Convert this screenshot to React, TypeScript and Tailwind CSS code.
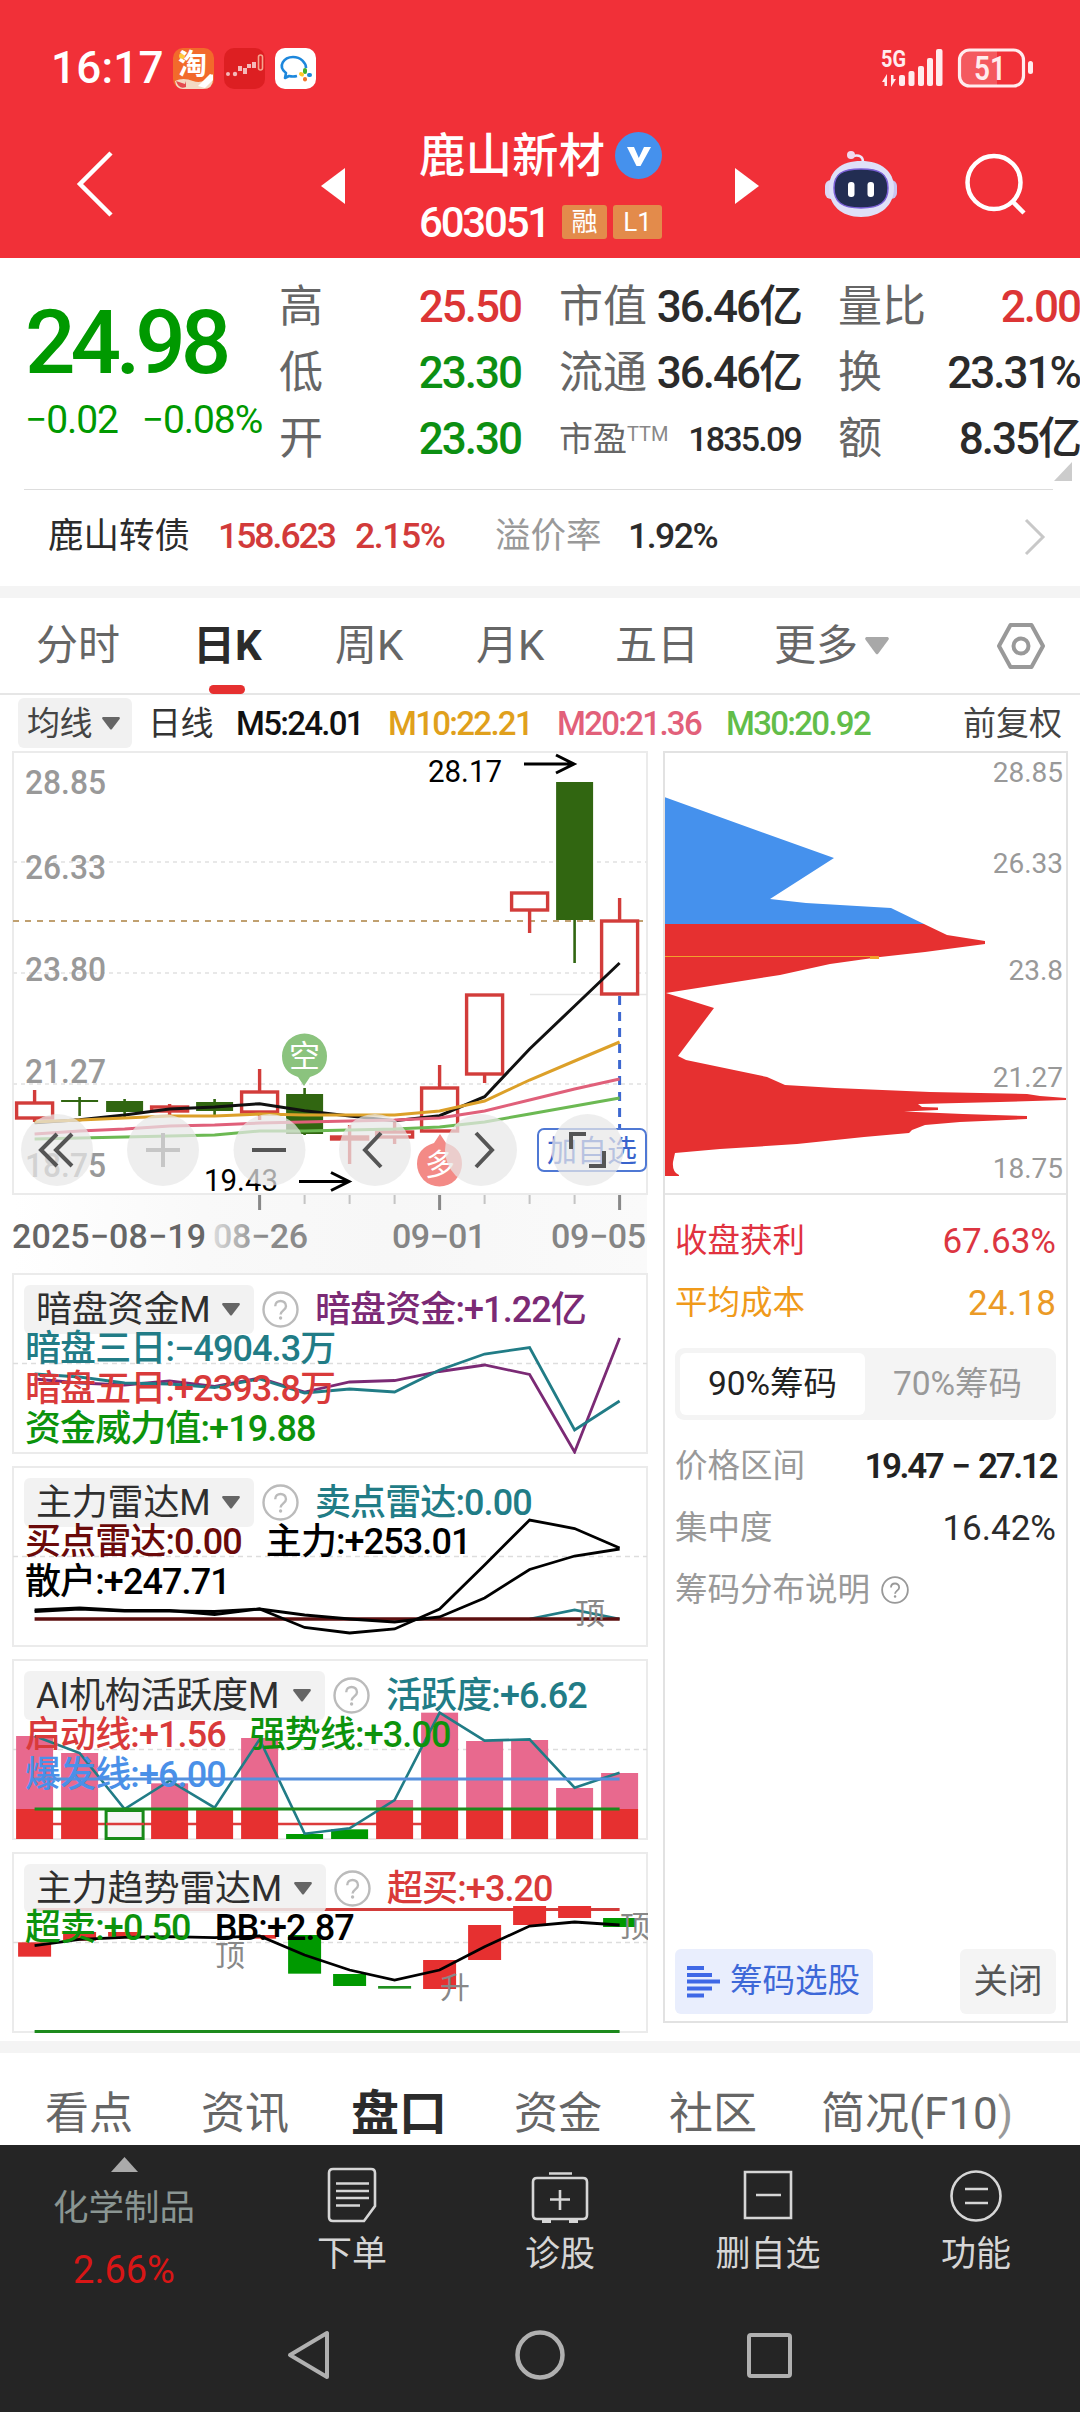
import type { ReactNode } from 'react'

// every daily column in the charts shares the same 45px pitch
const cx = (i: number) => 34.6 + 45 * i
const line = (ys: number[], from = 0) => ys.map((y, i) => `${cx(i + from)},${y}`).join(' ')

const RED = '#d23c3a'
const TEAL = '#217c86'

// [open/close top, bottom, wick top, wick bottom, kind]
const candles: [number, number, number, number, string][] = [
  [1103, 1118, 1090, 1122, 'up'],
  [1100, 1102, 1097, 1116, 'down'],
  [1101, 1112, 1099, 1117, 'down'],
  [1107, 1111, 1104, 1115, 'up'],
  [1102, 1111, 1099, 1115, 'down'],
  [1092, 1112, 1069, 1120, 'up'],
  [1094, 1134, 1088, 1135, 'down'],
  [1137, 1139, 1125, 1164, 'up'],
  [1132, 1137, 1121, 1144, 'up'],
  [1088, 1131, 1065, 1131, 'up'],
  [995, 1074, 995, 1083, 'up'],
  [893, 910, 893, 933, 'up'],
  [782, 920, 782, 963, 'down'],
  [921, 994, 898, 994, 'up'],
]

const Triangle = ({ className = 'text-[#666]', w = 18, h = 13 }: { className?: string; w?: number; h?: number }) => (
  <svg width={w} height={h} viewBox="0 0 18 13" preserveAspectRatio="none" className={className}>
    <path d="M1 0h16q1.4 0.6 0.6 2L10 12q-1 1.2-2 0L0.4 2Q-0.4 0.6 1 0z" fill="currentColor" />
  </svg>
)

const Help = ({ size = 37, color = '#bbb' }: { size?: number; color?: string }) => (
  <svg width={size} height={size} viewBox="0 0 37 37" fill="none" stroke={color} className="shrink-0">
    <circle cx="18.5" cy="18.5" r="17" strokeWidth="2.4" />
    <path d="M13.2 15.2c0-7 10.8-7 10.8 0 0 4-5.4 4.300-5.400 8.300" strokeWidth="2.4" />
    <circle cx="18.6" cy="27" r="0.9" strokeWidth="1.6" />
  </svg>
)

const StatusBar = () => (
  <div className="flex h-[110px] items-center pt-[26px] pl-[51px] text-white">
    <span className="w-[122px] text-[44px] leading-none font-medium tracking-[0.2px]">16:17</span>
    <div className="flex gap-[10px]">
      <svg width="41" height="41" viewBox="0 0 41 41">
        <rect width="41" height="41" rx="10" fill="#f26a2b" />
        <path d="M2 33q8-4 18 0t20-7v5q0 10-10 10H10q-7 0-8-8z" fill="#f3d9c4" />
        <path d="M3 33l9 3 1-3v6q-7 3-10-6z" fill="#e44a4f" />
        <path d="M25 38l12-12 3 1v5l-8 8z" fill="#fff" />
        <circle cx="9" cy="8" r="3" fill="#ffc93c" />
        <text x="5" y="27" fontSize="29" fontWeight="700" fill="#fff">淘</text>
      </svg>
      <svg width="41" height="41" viewBox="0 0 41 41">
        <rect width="41" height="41" rx="10" fill="#dd1f22" />
        <g fill="#f4b9b9">
          <circle cx="4" cy="26" r="2" />
          <circle cx="11" cy="26" r="2.200" />
          <rect x="14" y="18" width="4" height="5" />
          <rect x="19" y="20" width="4" height="6" />
          <rect x="23" y="16" width="4" height="4" />
          <rect x="28" y="14" width="4" height="6" />
        </g>
        <rect x="34.500" y="7" width="4" height="15" rx="2" fill="none" stroke="#f6a48f" strokeWidth="1.600" />
      </svg>
      <svg width="41" height="41" viewBox="0 0 41 41">
        <rect width="41" height="41" rx="10" fill="#fff" />
        <path d="M22 28q-4 1-8 0l-4 2 1-5C2 18 9 9 18 9c8 0 13 6 13 11" fill="none" stroke="#1d87dc" strokeWidth="2.600" strokeLinejoin="round" />
        <path d="M30 22v2" stroke="#43b02a" strokeWidth="4" strokeLinecap="round" />
        <path d="M26 26l1 0.500" stroke="#ffc928" strokeWidth="4" strokeLinecap="round" />
        <path d="M34 27h1" stroke="#1d87dc" strokeWidth="4" strokeLinecap="round" />
        <path d="M30 31v0.500" stroke="#f0762b" strokeWidth="4" strokeLinecap="round" />
      </svg>
    </div>
    <svg width="155" height="42" viewBox="880 47 155 42" className="ml-[564px]" fill="#ffecee">
      <text x="881" y="67" fontSize="24" fontWeight="700" textLength="25" lengthAdjust="spacingAndGlyphs">5G</text>
      <path d="M882 82l5-8v12h-2.500v-4zM896 79l-5 8V75h2.500v4z" />
      <rect x="899" y="75" width="6" height="11" rx="2" />
      <rect x="908.500" y="71" width="6" height="15" rx="2" />
      <rect x="918" y="66" width="6" height="20" rx="2" />
      <rect x="927" y="58" width="6" height="28" rx="2" />
      <rect x="936" y="49" width="6.500" height="37" rx="2" />
      <path d="M968 51h29v34h-29q-8 0-8-8V59q0-8 8-8z" opacity=".22" />
      <rect x="959.500" y="50" width="64" height="36" rx="10" fill="none" stroke="#ffecee" strokeWidth="3.200" />
      <rect x="1028" y="61" width="5" height="13" rx="2.500" />
      <text x="974" y="80" fontSize="34" fontWeight="600" textLength="32" lengthAdjust="spacingAndGlyphs">51</text>
    </svg>
  </div>
)

const TitleBar = () => (
  <div className="flex h-[148px] items-center pl-[76px] text-white">
    <svg width="37" height="66" viewBox="0 0 37 66" fill="none" stroke="#fff" strokeWidth="4.500">
      <path d="M35 2L4 33L35 64" />
    </svg>
    <svg width="24" height="36" viewBox="0 0 24 36" className="ml-[208px] mt-[4px]">
      <path d="M24 0v36L0 18z" fill="#fff" />
    </svg>
    <div className="ml-[74px] flex w-[243px] flex-col self-start pt-[15px]">
      <div className="flex h-[60px] items-center justify-between">
        <span className="pt-[2px] text-[46.5px] leading-none font-medium">鹿山新材</span>
        <svg width="47" height="47" viewBox="0 0 47 47">
          <circle cx="23.500" cy="23.500" r="23.500" fill="#4591ed" />
          <path d="M12 15h7l4.800 11L29 15h7L25.500 34h-4z" fill="#fff" />
        </svg>
      </div>
      <div className="flex h-[74px] items-center justify-between">
        <span className="pt-[1px] text-[42px] leading-none tracking-[-2.200px] font-medium">603051</span>
        <div className="flex gap-[6px] text-[26px] leading-none">
          <span className="flex h-[34px] w-[45px] items-center justify-center rounded-[3px] bg-[#e38b4b]">融</span>
          <span className="flex h-[34px] w-[49px] items-center justify-center rounded-[3px] bg-[#e38b4b]">L1</span>
        </div>
      </div>
    </div>
    <svg width="24" height="36" viewBox="0 0 24 36" className="ml-[73px] mt-[4px]">
      <path d="M0 0v36l24-18z" fill="#fff" />
    </svg>
    <svg width="74" height="68" viewBox="824 149 74 68" className="ml-[65px]">
      <path d="M863 161q0-8-10-6" fill="none" stroke="#eee9fb" strokeWidth="2.500" />
      <circle cx="851" cy="154" r="4" fill="#f1d9ee" />
      <rect x="825" y="179" width="14" height="19" rx="6" fill="#dcd8f4" />
      <rect x="883" y="179" width="14" height="19" rx="6" fill="#c9c5f0" />
      <path d="M861 160c20 0 33 10 33 27s-13 29-33 29-32-12-32-29 12-27 32-27z" fill="#dfe0f8" />
      <path d="M861 168c19 0 27 5 27 19s-8 20-27 20-27-6-27-20 8-19 27-19z" fill="#222d52" stroke="#7a5fd6" strokeWidth="1.500" />
      <rect x="848" y="181" width="6.500" height="15" rx="3" fill="#fff" />
      <rect x="867.500" y="181" width="6.500" height="15" rx="3" fill="#fff" />
    </svg>
    <svg width="62" height="62" viewBox="0 0 62 62" className="ml-[67px]" fill="none" stroke="#fff" strokeWidth="4.500">
      <circle cx="29" cy="29.500" r="26.500" />
      <path d="M47 48l12 12" />
    </svg>
  </div>
)

const Quote = ({ label, value, color = 'text-[#2b2b2b]', small = false }: { label: ReactNode; value: string; color?: string; small?: boolean }) => (
  <div className="flex h-[66px] items-center justify-between leading-none">
    <span className={`whitespace-nowrap text-[#666] ${small ? 'text-[34px]' : 'text-[44px]'}`}>{label}</span>
    <span className={`whitespace-nowrap font-medium ${color} ${small ? 'text-[34px] tracking-[-1.800px]' : 'text-[44px] tracking-[-2px]'}`}>{value}</span>
  </div>
)

const QuotePanel = () => (
  <section className="relative h-[231px] bg-white pt-[16px]">
    <div className="flex">
      <div className="w-[279px] pl-[25px] text-[#009900]">
        <div className="pt-[24px] text-[89px] leading-[90px] font-medium tracking-[-5.200px]">24.98</div>
        <div className="mt-[10px] flex gap-[24px] text-[39px] leading-[44px] tracking-[-1.100px]">
          <span>−0.02</span>
          <span>−0.08%</span>
        </div>
      </div>
      <div className="w-[242px]">
        <Quote label="高" value="25.50" color="text-[#dc3535]" />
        <Quote label="低" value="23.30" color="text-[#0c8f12]" />
        <Quote label="开" value="23.30" color="text-[#0c8f12]" />
      </div>
      <div className="ml-[38px] w-[242px]">
        <Quote label="市值" value="36.46亿" />
        <Quote label="流通" value="36.46亿" />
        <Quote small label={<>市盈<sup className="text-[20px] text-[#888]">TTM</sup></>} value="1835.09" />
      </div>
      <div className="ml-[37px] w-[242px]">
        <Quote label="量比" value="2.00" color="text-[#dc3535]" />
        <Quote label="换" value="23.31%" />
        <Quote label="额" value="8.35亿" />
      </div>
    </div>
    <svg width="18" height="19" viewBox="0 0 18 19" className="absolute right-[8px] bottom-[8px]">
      <path d="M18 0v19H0z" fill="#ccc" />
    </svg>
  </section>
)

const BondRow = () => (
  <section className="flex h-[96px] items-center bg-white pl-[48px] text-[35.5px] leading-none">
    <div className="flex w-full items-center pb-[2px]">
      <span className="w-[170px] text-[#2b2b2b]">鹿山转债</span>
      <span className="w-[137px] font-medium tracking-[-2px] text-[#d23a3a]">158.623</span>
      <span className="w-[140px] font-medium tracking-[-1.400px] text-[#d23a3a]">2.15%</span>
      <span className="w-[133px] text-[#999]">溢价率</span>
      <span className="w-[395px] font-medium tracking-[-1.500px] text-[#2b2b2b]">1.92%</span>
      <svg width="24" height="38" viewBox="0 0 24 38" fill="none" stroke="#c8c8c8" strokeWidth="3">
        <path d="M3 2l17 17L3 36" />
      </svg>
    </div>
  </section>
)

const Tabs = () => (
  <nav className="flex h-[97px] items-center border-b-2 border-[#e6e6e6] bg-white pl-[36px] text-[42px] leading-none text-[#666]">
    <span className="w-[157px]">分时</span>
    <span className="relative w-[142px] font-bold text-[#2b2b2b]">
      日K
      <i className="absolute top-[60px] left-[16px] h-[9px] w-[36px] rounded-full bg-[#e63030]" />
    </span>
    <span className="w-[141px]">周K</span>
    <span className="w-[139px]">月K</span>
    <span className="w-[159px]">五日</span>
    <span className="flex w-[222px] items-center gap-[7px]">
      更多
      <Triangle w={24} h={18} className="text-[#a8a8a8]" />
    </span>
    <svg width="50" height="48" viewBox="0 0 50 48" fill="none" stroke="#999" strokeWidth="4" strokeLinejoin="round">
      <path d="M14.500 3h21L47 24L35.500 45h-21L3 24z" />
      <circle cx="25" cy="24" r="7.500" />
    </svg>
  </nav>
)

const AverageRow = () => (
  <div className="flex h-[56px] items-center bg-white pl-[18px] text-[33px] leading-none font-medium tracking-[-1.700px]">
    <span className="mr-[16px] flex h-[50px] w-[114px] items-center gap-[10px] rounded-[6px] bg-[#f1f1f1] pl-[9px] font-normal tracking-[-0.500px] text-[#444]">
      均线
      <Triangle />
    </span>
    <span className="w-[88px] font-normal tracking-[-0.500px] text-[#333]">日线</span>
    <span className="w-[152px] text-[#111]">M5:24.01</span>
    <span className="w-[169px] text-[#e0a01c]">M10:22.21</span>
    <span className="w-[169px] text-[#e2607a]">M20:21.36</span>
    <span className="w-[237px] text-[#62bd49]">M30:20.92</span>
    <span className="font-normal tracking-normal text-[#444]">前复权</span>
  </div>
)

const PriceChart = () => (
  <svg width="660" height="526" viewBox="0 750 660 526">
    <defs>
      <linearGradient id="haze" x1="0" x2="1">
        <stop offset="0" stopColor="#fff" />
        <stop offset=".3" stopColor="#f9f9f9" />
        <stop offset=".6" stopColor="#f7f7f7" />
        <stop offset="1" stopColor="#fafafa" />
      </linearGradient>
      <linearGradient id="fade" gradientUnits="userSpaceOnUse" x1="212" x2="262">
        <stop offset="0" stopColor="#ddd" />
        <stop offset="1" stopColor="#8a8a8a" />
      </linearGradient>
    </defs>
    <rect x="13" y="1194" width="634" height="90" fill="url(#haze)" />
    <rect x="13" y="752" width="634" height="442" fill="#fff" stroke="#ebebeb" strokeWidth="2" />
    <path d="M13 862h634M13 973h634M13 1084h634" stroke="#e8e8e8" strokeWidth="2" strokeDasharray="4 4" />
    <path d="M530 994.500h117" stroke="#e6e6e6" strokeWidth="1.500" />
    <path d="M13 921h634" stroke="#c0a070" strokeWidth="2" strokeDasharray="6 6" />

    <g fontSize="34" fontWeight="500" fill="#999">
      <text x="25" y="793.500" textLength="81" lengthAdjust="spacingAndGlyphs">28.85</text>
      <text x="25" y="878.500" textLength="81" lengthAdjust="spacingAndGlyphs">26.33</text>
      <text x="25" y="980.500" textLength="81" lengthAdjust="spacingAndGlyphs">23.80</text>
      <text x="25" y="1082.500" textLength="81" lengthAdjust="spacingAndGlyphs">21.27</text>
      <text x="25" y="1176.500" textLength="81" lengthAdjust="spacingAndGlyphs">18.75</text>
    </g>

    <path d={`M${cx(13)} 996V1130`} stroke="#3d68d0" strokeWidth="3" strokeDasharray="9 7" />
    {candles.map(([top, bottom, high, low, kind], i) => {
      const up = kind === 'up'
      const color = up ? RED : '#316611'
      return (
        <g key={i} stroke={color}>
          <path d={`M${cx(i)} ${high}V${top}M${cx(i)} ${bottom}V${low}`} strokeWidth={up ? 3.4 : 2.6} />
          {up ? (
            <rect x={cx(i) - 18} y={top} width="36" height={bottom - top} fill="#fff" strokeWidth="3.400" />
          ) : (
            <rect x={cx(i) - 18.5} y={top} width="37" height={bottom - top} fill={color} stroke="none" />
          )}
        </g>
      )
    })}
    <g fill="none" strokeWidth="3">
      <polyline points={line([1122.7, 1119.7, 1115, 1109, 1107, 1103.7, 1110.7, 1116, 1120.7, 1115.7, 1096.7, 1049, 1006, 963])} stroke="#111" />
      <polyline points={line([1122, 1120, 1118, 1116, 1116, 1114, 1115, 1115, 1115, 1111, 1101, 1080, 1061, 1042])} stroke="#dca029" />
      <polyline points={line([1134, 1131, 1129, 1126, 1125, 1123, 1122, 1121, 1120, 1118, 1111, 1100, 1089, 1079])} stroke="#e0607a" />
      <polyline points={line([1139, 1138, 1137, 1136, 1135, 1131, 1131, 1130, 1129, 1127, 1122, 1114, 1106, 1098])} stroke="#6cb953" />
    </g>

    {/* buy / sell balloons */}
    <path d="M304 1086l-6-9q-16-5-16-21a22.500 22.500 0 0 1 45 0q0 16-17 21z" fill="#8bc37e" />
    <text x="304.500" y="1067" fontSize="31" textAnchor="middle" fill="#fff">空</text>
    <path d="M440 1134l6 9q16 5 16 21a22.500 22.500 0 0 1-45 0q0-16 17-21z" fill="#f38a86" />
    <text x="440" y="1175" fontSize="30" textAnchor="middle" fill="#fff">多</text>

    <g fontSize="32" fill="#000">
      <text x="428" y="782" textLength="74" lengthAdjust="spacingAndGlyphs">28.17</text>
      <text x="204" y="1191" textLength="74" lengthAdjust="spacingAndGlyphs">19.43</text>
    </g>
    <path d="M524 764h50M556 755l18 9l-18 9M299 1181.500h50M331 1172.500l18 9l-18 9" fill="none" stroke="#000" strokeWidth="3" />

    <rect x="538" y="1129" width="108" height="42" rx="6" fill="#fff" stroke="#4f78d4" strokeWidth="2" />
    <text x="592" y="1161" fontSize="30" textAnchor="middle" fill="#3963cc">加自选</text>

    {/* floating chart controls */}
    <g fill="#e8e8e8" fillOpacity=".72">
      {[57, 163, 269.5, 375, 481, 587.5].map((x) => <circle key={x} cx={x} cy="1150" r="36" />)}
    </g>
    <g fill="none" stroke="#555" strokeWidth="4">
      <path d="M57 1134l-16 16l16 16M72 1134l-16 16l16 16" />
      <path d="M146 1150h34M163 1133v34" stroke="#c6c6c6" />
      <path d="M252 1150h34" />
      <path d="M381 1133l-16 17l16 17M476 1133l16 17l-16 17" />
      <path d="M571 1149v-15h15M604 1151v15h-15" />
    </g>

    <path d="M304.600 1195v9M349.600 1195v9M394.600 1195v9M484.600 1195v9M529.600 1195v9M574.600 1195v9" stroke="#c4c4c4" strokeWidth="2" />
    <path d="M259.600 1195v15M439.600 1195v15M619.600 1195v15" stroke="#888" strokeWidth="3" />
    <g fontSize="34" fontWeight="500" fill="#858585">
      <text x="12" y="1248" fill="#666" textLength="194" lengthAdjust="spacing">2025−08−19</text>
      <text x="213" y="1248" fill="url(#fade)" textLength="95" lengthAdjust="spacing">08−26</text>
      <text x="392" y="1248" textLength="94" lengthAdjust="spacing">09−01</text>
      <text x="551" y="1248" textLength="95" lengthAdjust="spacing">09−05</text>
    </g>
  </svg>
)

type PanelProps = { title: string; buttonClass: string; first: ReactNode; rows?: ReactNode; chart: ReactNode; viewBox: string }

// indicator strip: drop-down title and legend drawn over the chart
const Indicator = ({ title, buttonClass, first, rows, chart, viewBox }: PanelProps) => (
  <div className="relative ml-[12px] h-[181px] w-[636px] border-2 border-[#ebebeb] text-[36px] leading-none tracking-[-0.900px]">
    <svg width="636" height="181" viewBox={viewBox} className="absolute -top-[2px] -left-[2px] max-w-none">{chart}</svg>
    <div className="relative pt-[10px] pl-[10px]">
      <div className="flex h-[49px] items-center font-medium whitespace-nowrap">
        <span className={`flex h-[49px] items-center justify-between rounded-[6px] bg-[#f0f0f0]/85 pr-[14px] pl-[12px] font-normal tracking-[-0.200px] text-[#2f2f2f] ${buttonClass}`}>
          {title}
          <Triangle />
        </span>
        <span className="mr-[16px] ml-[8px]"><Help /></span>
        {first}
      </div>
      <div className="-mt-[5px] pl-px font-medium">{rows}</div>
    </div>
  </div>
)

const Row = ({ children }: { children: ReactNode }) => <div className="flex h-[40px] items-center gap-[24px] whitespace-nowrap">{children}</div>

// bar and line tops are stored at three times the drawn size
const toY = (v: number) => v / 3 + 1650

const activity = [258, 309, 478, 400, 475, 264, 552, 538, 450, 188, 273, 270, 414, 369]

const trend: [number, number, number, string][] = [
  [0, 877, 920, '#e63030'],
  [1, 846, 872, '#e63030'],
  [2, 846, 860, '#e63030'],
  [5, 855, 866, '#e63030'],
  [6, 855, 971, '#009900'],
  [7, 972, 1008, '#009900'],
  [8, 1008, 1016, '#1f8f1f'],
  [9, 930, 1017, '#e63030'],
  [10, 825, 930, '#e63030'],
  [11, 768, 825, '#e63030'],
  [12, 768, 804, '#e63030'],
  [13, 804, 831, '#009900'],
]

const Indicators = () => (
  <div className="flex flex-col gap-[12px]">
    <Indicator
      title="暗盘资金M"
      buttonClass="w-[230px]"
      viewBox="12 1273 636 181"
      first={<span className="text-[#7b2a75]">暗盘资金:+1.22亿</span>}
      rows={
        <>
          <Row><span className="text-[#217c86]">暗盘三日:−4904.3万</span></Row>
          <Row><span className="text-[#d93a3a]">暗盘五日:+2393.8万</span></Row>
          <Row><span className="text-[#0c930c]">资金威力值:+19.88</span></Row>
        </>
      }
      chart={
        <g fill="none" strokeWidth="2.800">
          <path d="M13 1363.500h634" stroke="#ddd" strokeWidth="1.500" strokeDasharray="5 4" />
          <polyline stroke="#7b2a75" points={line([1379, 1383, 1385, 1381, 1386.500, 1378, 1392, 1382, 1380.500, 1371.500, 1365, 1374.500, 1452, 1338])} />
          <polyline stroke={TEAL} points={line([1374, 1377, 1383, 1384, 1387.500, 1379, 1393, 1389, 1392, 1370, 1354, 1347.500, 1430, 1401])} />
        </g>
      }
    />
    <Indicator
      title="主力雷达M"
      buttonClass="w-[230px]"
      viewBox="12 1466 636 181"
      first={<span className="text-[#217c86]">卖点雷达:0.00</span>}
      rows={
        <>
          <Row>
            <span className="text-[#6b0a0a]">买点雷达:0.00</span>
            <span className="text-black">主力:+253.01</span>
          </Row>
          <Row><span className="text-black">散户:+247.71</span></Row>
        </>
      }
      chart={
        <g fill="none" strokeWidth="2.800">
          <path d="M13 1556.500h634" stroke="#ddd" strokeWidth="1.500" strokeDasharray="5 4" />
          <polyline stroke={TEAL} points={line([1619, 1610, 1619], 11)} />
          <path d={`M${cx(0)} 1619H${cx(13)}`} stroke="#5c0f0f" strokeWidth="3.500" />
          <polyline stroke="#000" points={line([1610, 1608, 1610.500, 1610.500, 1614.500, 1609, 1615, 1619, 1622, 1617, 1598, 1569.500, 1556, 1549])} />
          <polyline stroke="#000" points={line([1611.500, 1609, 1611, 1611, 1611.500, 1609, 1627.500, 1633, 1629, 1609, 1565, 1520, 1528.500, 1548])} />
          <text x="575" y="1624" fontSize="30" fill="#888">顶</text>
        </g>
      }
    />
    <Indicator
      title="AI机构活跃度M"
      buttonClass="w-[301px]"
      viewBox="12 1659 636 181"
      first={<span className="text-[#217c86]">活跃度:+6.62</span>}
      rows={
        <>
          <Row>
            <span className="text-[#d93a3a]">启动线:+1.56</span>
            <span className="text-[#0c930c]">强势线:+3.00</span>
          </Row>
          <Row><span className="text-[#4a90e8]">爆发线:+6.00</span></Row>
        </>
      }
      chart={
        <g fill="none">
          <path d="M13 1749.500h634" stroke="#ddd" strokeWidth="1.500" strokeDasharray="5 4" />
          <path d={`M${cx(0)} 1824H${cx(9)}`} stroke="#dc3b3b" strokeWidth="2.600" />
          {activity.map((top, i) => {
            const y = toY(top)
            if (i === 2) return <rect key={i} x={cx(i) - 18.5} y="1810.500" width="37" height="28" fill="#f6f6f6" stroke="#178a17" strokeWidth="3" />
            if (i === 6 || i === 7) return <rect key={i} x={cx(i) - 18.5} y={y} width="37" height={1839 - y} fill="#009900" />
            return (
              <g key={i}>
                <rect x={cx(i) - 18.5} y={y} width="37" height={1809 - y} fill="#e8698e" />
                <rect x={cx(i) - 18.5} y="1809" width="37" height="30" fill="#e63030" />
              </g>
            )
          })}
          <path d="M106 1824h38" stroke="#dc3b3b" strokeWidth="2.600" />
          <polyline stroke={TEAL} strokeWidth="2.600" points={line([258, 309, 477, 392, 473, 268, 551, 535, 450, 188, 272, 268, 413, 368].map(toY))} />
          <path d={`M${cx(0)} 1779H${cx(13)}`} stroke="#5590dd" strokeWidth="3" />
          <path d={`M${cx(0)} 1809H${cx(13)}`} stroke="#1c8a1c" strokeWidth="3" />
        </g>
      }
    />
    <Indicator
      title="主力趋势雷达M"
      buttonClass="w-[302px]"
      viewBox="12 1852 636 181"
      first={<span className="text-[#d93a3a]">超买:+3.20</span>}
      rows={
        <Row>
          <span className="text-[#0c930c]">超卖:+0.50</span>
          <span className="text-black">BB:+2.87</span>
        </Row>
      }
      chart={
        <g fill="none">
          <path d="M13 1942.500h634" stroke="#ddd" strokeWidth="1.500" strokeDasharray="5 4" />
          <path d={`M${cx(0)} 1909.500H${cx(13)}`} stroke={RED} strokeWidth="2.800" />
          {trend.map(([i, top, bottom, color]) => (
            <rect key={i} x={cx(i) - 16.5} y={toY(top)} width="33" height={(bottom - top) / 3} fill={color} />
          ))}
          <polyline stroke="#000" strokeWidth="2.800" points={line([887, 868, 862, 860, 863, 858, 915, 960, 990, 960, 890, 828, 816, 825].map(toY))} />
          <path d={`M${cx(0)} 2031.500H${cx(13)}`} stroke="#1c8a1c" strokeWidth="3" />
          <g fontSize="30" fill="#888">
            <text x="215" y="1966">顶</text>
            <text x="440" y="1998">升</text>
            <text x="620" y="1937">顶</text>
          </g>
        </g>
      }
    />
  </div>
)

const Stat = ({ label, value, labelClass = 'text-[#999]', valueClass = 'text-[#2b2b2b]' }: { label: string; value: string; labelClass?: string; valueClass?: string }) => (
  <div className="flex h-[62px] items-center justify-between text-[32.5px]">
    <span className={labelClass}>{label}</span>
    <span className={`text-[35px] ${valueClass}`}>{value}</span>
  </div>
)

const ChipPanel = () => (
  <aside className="ml-[3px] h-[1272px] w-[405px] border-2 border-[#e2e2e2] leading-none">
    <svg width="401" height="440" viewBox="665 753 401 440" className="block">
      <path d="M664 797L834 858L770 899L806 903L891 908L924 924H664z" fill="#4591ed" />
      <path d="M664 924H924L947 935L985 941V944L925 952L880 957L830 964L780 975L666 993L714 1008L678 1056L686 1060L767 1077L785 1085L835 1088L930 1092L1027 1094L1040 1096L1067 1098V1100L1000 1102L918 1104L922 1107L938 1107.500V1110L904 1111.500L963 1114L1027 1116V1119L960 1122L925 1125L912 1130L909 1133L864 1137L797 1144L720 1149L675 1153L673 1162Q672 1172 679 1175V1176H664z" fill="#e63030" />
      <path d="M664 956.500h210" stroke="#f2a12c" strokeWidth="1.200" />
      <path d="M870 957.500h9" stroke="#f2a12c" strokeWidth="3" />
      <g fontSize="28" fill="#999" textAnchor="end">
        <text x="1063" y="782">28.85</text>
        <text x="1063" y="873">26.33</text>
        <text x="1063" y="980">23.8</text>
        <text x="1063" y="1087">21.27</text>
        <text x="1063" y="1178">18.75</text>
      </g>
    </svg>
    <div className="flex h-[828px] flex-col border-t-2 border-[#e6e6e6] pr-[10px] pl-[10px]">
      <div className="pt-[15px]">
        <Stat label="收盘获利" value="67.63%" labelClass="text-[#e1323f]" valueClass="text-[#dc3541]" />
        <Stat label="平均成本" value="24.18" labelClass="text-[#f09a1a]" valueClass="text-[#eb9a26]" />
      </div>
      <div className="mt-[14px] flex h-[72px] rounded-[9px] bg-[#f4f4f4] p-[5px] text-[33.500px] text-[#999]">
        <span className="flex w-[185px] items-center justify-center rounded-[6px] bg-white text-[#222]">90%筹码</span>
        <span className="flex w-[185px] items-center justify-center">70%筹码</span>
      </div>
      <div className="mt-[15px]">
        <Stat label="价格区间" value="19.47 − 27.12" valueClass="font-semibold tracking-[-2.400px] [word-spacing:3px] text-[#222]" />
        <Stat label="集中度" value="16.42%" />
        <div className="flex h-[62px] items-center gap-[11px] text-[32.500px] text-[#999]">
          筹码分布说明
          <Help size={28} color="#999" />
        </div>
      </div>
      <div className="mt-auto mb-[7px] flex justify-between">
        <span className="flex h-[65px] w-[198px] items-center gap-[10px] rounded-[6px] bg-[#e9eefd] pl-[12px] text-[32.500px] text-[#3d68d8]">
          <svg width="33" height="33" viewBox="0 0 33 33" fill="none" stroke="#3f68e6" strokeWidth="4">
            <path d="M0 3h17M0 10h25M0 16.500h33M0 23.500h25M0 30.500h17" />
          </svg>
          筹码选股
        </span>
        <span className="flex h-[65px] w-[96px] items-center justify-center rounded-[6px] bg-[#f4f4f4] text-[34.500px] text-[#555]">关闭</span>
      </div>
    </div>
  </aside>
)

const InfoTabs = () => (
  <nav className="flex h-[92px] items-center bg-white pt-[30px] pl-[45px] text-[44px] leading-none whitespace-nowrap text-[#666]">
    <span className="w-[156px]">看点</span>
    <span className="w-[150px]">资讯</span>
    <span className="w-[163px] text-[48px] font-bold text-[#2b2b2b]">盘口</span>
    <span className="w-[155px]">资金</span>
    <span className="w-[152px]">社区</span>
    <span>简况(F10<span className="text-[#999]">)</span></span>
  </nav>
)

const Action = ({ label, children }: { label: string; children: ReactNode }) => (
  <div className="flex w-[208px] flex-col items-center text-[35px] leading-none text-[#d6d6d6]">
    <svg width="62" height="60" viewBox="0 0 62 60" fill="none" stroke="#d6d6d6" strokeWidth="2.600" className="mt-[20px] mb-[12px]">
      {children}
    </svg>
    {label}
  </div>
)

const ActionBar = () => (
  <footer className="h-[268px] bg-[#252525]">
    <div className="flex h-[165px]">
      <div className="flex w-[248px] flex-col items-center text-[35.500px] leading-none">
        <svg width="27" height="15" viewBox="0 0 27 15" className="mt-[12px] mb-[19px]">
          <path d="M13.500 0L27 15H0z" fill="#aaa" />
        </svg>
        <span className="text-[#8a9592]">化学制品</span>
        <span className="mt-[24px] text-[38px] text-[#d81616]">2.66%</span>
      </div>
      <Action label="下单">
        <path d="M12 4h38q4 0 4 4v33l-11 15H12q-4 0-4-4V8q0-4 4-4z" />
        <path d="M15 18.500h33M15 26h33M15 33h33M15 40.500h24" />
      </Action>
      <Action label="诊股">
        <path d="M20 8.500h23M8 13h46q4 0 4 4v33q0 4-4 4H8q-4 0-4-4V17q0-4 4-4zM31 25v20M21 34.500h20" />
        <path d="M13 56h9M40 56h9" strokeWidth="4" />
      </Action>
      <Action label="删自选">
        <path d="M8 7h46v46H8zM19 30h25" />
      </Action>
      <Action label="功能">
        <circle cx="31" cy="31" r="24.500" />
        <path d="M20 24h23M20 38h23" />
      </Action>
    </div>
    <div className="flex h-[90px] items-center">
      <svg width="46" height="52" viewBox="0 0 46 52" className="ml-[286px]" fill="none" stroke="#b0b0b0" strokeWidth="4" strokeLinejoin="round">
        <path d="M41 4v44L4 26z" />
      </svg>
      <svg width="52" height="52" viewBox="0 0 52 52" className="ml-[182px]" fill="none" stroke="#b0b0b0" strokeWidth="4.500">
        <circle cx="26" cy="26" r="22.500" />
      </svg>
      <svg width="48" height="48" viewBox="0 0 48 48" className="ml-[179px]" fill="none" stroke="#b0b0b0" strokeWidth="4">
        <rect x="4" y="4" width="41" height="41" rx="2" />
      </svg>
    </div>
  </footer>
)

const App = () => {
  return (
    <main className="h-[2412px] w-[1080px] overflow-hidden bg-white font-['Roboto','Noto_Sans_CJK_SC',sans-serif]">
      <header className="h-[258px] bg-[#f13038]">
        <StatusBar />
        <TitleBar />
      </header>
      <QuotePanel />
      <div className="mr-[27px] ml-[24px] h-px bg-[#ddd]" />
      <BondRow />
      <div className="h-[12px] bg-[#f4f4f4]" />
      <Tabs />
      <AverageRow />
      <div className="flex h-[1290px] bg-white">
        <div className="w-[660px]">
          <div className="-mt-px h-[523px] overflow-hidden"><PriceChart /></div>
          <Indicators />
        </div>
        <ChipPanel />
      </div>
      <div className="h-[12px] bg-[#f4f4f4]" />
      <InfoTabs />
      <ActionBar />
    </main>
  )
}

export default App
